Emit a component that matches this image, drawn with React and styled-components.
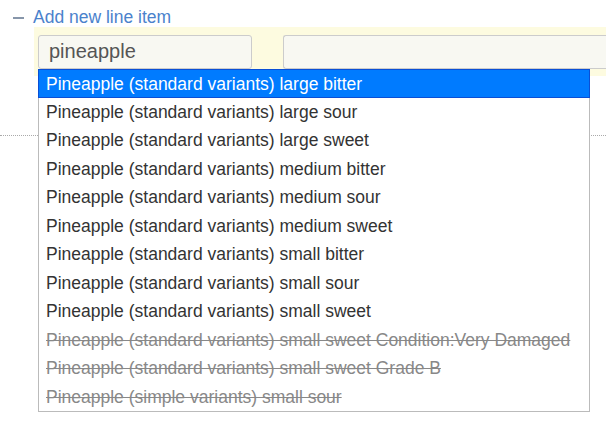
import React from "react"
import styled, { createGlobalStyle } from "styled-components"

const Global = createGlobalStyle`
  body {
    margin: 0;
    background: #fff;
    font-family: "Liberation Sans", Arial, sans-serif;
  }
`

const Page = styled.div`
  width: 606px;
  height: 423px;
  overflow: hidden;
  position: relative;
`

const Toggle = styled.div`
  display: flex;
  align-items: center;
  gap: 9px;
  padding: 8px 0 0 13px;
  height: 19px;
  font-size: 17.5px;
  color: #4b82cc;
`

const Dash = styled.span`
  width: 11px;
  height: 2px;
  background: #8796aa;
`

const Band = styled.div`
  margin: 0 0 0 34px;
  height: 49px;
  background: #fdfbe0;
  display: flex;
  gap: 31px;
  padding: 8px 0 0 4px;
  box-sizing: border-box;
  position: relative;
`

const Input = styled.div`
  box-sizing: border-box;
  width: ${p => p.$w}px;
  flex: ${p => (p.$grow ? "1 0 auto" : "none")};
  height: 34px;
  border: 1px solid #ccc;
  border-right-width: ${p => (p.$grow ? 0 : 1)}px;
  border-radius: ${p => (p.$grow ? "3px 0 0 3px" : "3px")};
  background: #f8f8f2;
  font-size: 20px;
  color: #555;
  padding: 4px 0 0 10px;
`

const Rule = styled.div`
  margin-top: 59px;
  border-top: 1px dotted #aaa;
`

const Menu = styled.ul`
  position: absolute;
  left: 38px;
  top: 69px;
  width: 552px;
  box-sizing: border-box;
  margin: 0;
  padding: 0;
  list-style: none;
  background: #fff;
  border: 1px solid #bbb;
  border-top: 0;
`

const Item = styled.li`
  height: 28.5px;
  line-height: 29px;
  box-sizing: border-box;
  padding-left: 7px;
  font-size: 17.5px;
  white-space: nowrap;
  color: ${p => (p.$active ? "#fff" : p.$off ? "#888" : "#333")};
  background: ${p => (p.$active ? "#007bff" : "transparent")};
  text-decoration: ${p => (p.$off ? "line-through" : "none")};
  ${p => p.$active && "border: 1px solid #0a4fd6; margin: 0 -1px; padding-left: 7px; line-height: 28px;"}
`

const items = [
  ["Pineapple (standard variants) large bitter"],
  ["Pineapple (standard variants) large sour"],
  ["Pineapple (standard variants) large sweet"],
  ["Pineapple (standard variants) medium bitter"],
  ["Pineapple (standard variants) medium sour"],
  ["Pineapple (standard variants) medium sweet"],
  ["Pineapple (standard variants) small bitter"],
  ["Pineapple (standard variants) small sour"],
  ["Pineapple (standard variants) small sweet"],
  ["Pineapple (standard variants) small sweet Condition:Very Damaged", true],
  ["Pineapple (standard variants) small sweet Grade B", true],
  ["Pineapple (simple variants) small sour", true],
]

export default function App() {
  return (
    <Page>
      <Global />
      <Toggle>
        <Dash />
        <span>Add new line item</span>
      </Toggle>
      <Band>
        <Input $w={214}>pineapple</Input>
        <Input $grow />
      </Band>
      <Rule />
      <Menu>
        {items.map(([t, off], i) => (
          <Item key={i} $active={i === 0} $off={off}>{t}</Item>
        ))}
      </Menu>
    </Page>
  )
}
